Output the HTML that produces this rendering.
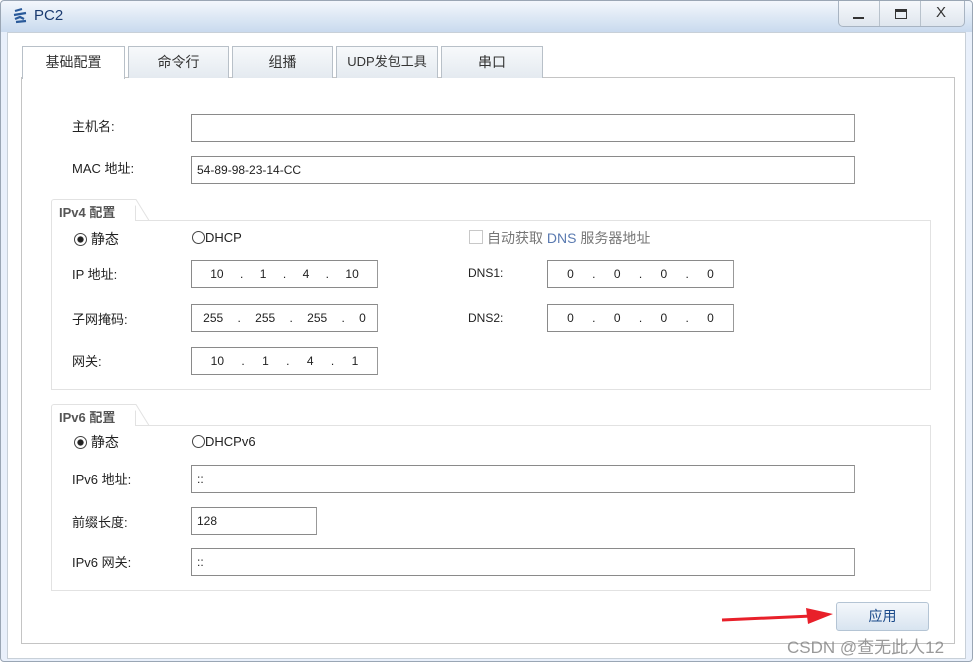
<!DOCTYPE html>
<html><head><meta charset="utf-8"><style>
*{box-sizing:border-box;margin:0;padding:0}
body{width:976px;height:666px;background:#fff;font-family:"Liberation Sans","Noto Sans CJK SC",sans-serif;font-size:13px;color:#222;position:relative;overflow:hidden}
.a{position:absolute}
.win{left:0;top:0;width:973px;height:662px;border:1px solid #9aa6b4;border-radius:4px;background:#e9f0fb}
.title{left:1px;top:1px;width:971px;height:31px;background:linear-gradient(#f3f7fc,#c9daee);border-radius:4px 4px 0 0}
.inner{left:7px;top:32px;width:959px;height:627px;background:#fff;border:1px solid #c8d0d8}
.box{left:21px;top:77px;width:934px;height:567px;border:1px solid #c4c4c4;background:#fff}
.tab{top:46px;height:32px;border:1px solid #b8c0c8;border-bottom:none;background:linear-gradient(#f7f9fb,#e4eaf0);text-align:center;line-height:30px;font-size:14px;color:#333}
.inp{height:28px;border:1px solid #8a8a8a;background:#fff;font-size:12px;line-height:26px;padding-left:5px;border-right-color:#999}
.lbl{font-size:13px;color:#222}
.grp{border:1px solid #e2e2e2;background:#fff}
.gt{font-size:13px;font-weight:bold;color:#555;background:#fff}
.rad{width:13px;height:13px;border:1px solid #444;border-radius:50%;display:inline-block;vertical-align:-2px}
.ip{display:flex;justify-content:space-around;padding:0 10px}
</style></head><body>
<div class="a win"></div>
<div class="a title"></div>
<svg class="a" style="left:12px;top:7px" width="18" height="18"><path d="M3 4 L10 2 M2 8 L14 6 M3 12 L8 10 L12 12 M4 15 L14 14" stroke="#2a5a9a" stroke-width="2.2" fill="none"/></svg>
<div class="a" style="left:34px;top:7px;font-size:15px;color:#1a3a70">PC2</div>
<div class="a" style="left:838px;top:1px;width:127px;height:26px;border:1px solid #a8b4c2;border-top:none;border-radius:0 0 5px 5px;background:linear-gradient(#f6f8fb,#dfe6ee)"></div>
<div class="a" style="left:879px;top:1px;width:1px;height:25px;background:#b8c2cc"></div>
<div class="a" style="left:920px;top:1px;width:1px;height:25px;background:#b8c2cc"></div>
<div class="a" style="left:853px;top:17px;width:11px;height:2px;background:#333"></div>
<div class="a" style="left:895px;top:9px;width:12px;height:10px;border:1px solid #333;border-top:3px solid #333"></div>
<div class="a" style="left:936px;top:4px;font-size:15px;color:#333">X</div>
<div class="a inner"></div>
<div class="a box"></div>
<div class="a tab" style="left:22px;width:103px;background:#fff;height:33px">基础配置</div>
<div class="a tab" style="left:128px;width:101px">命令行</div>
<div class="a tab" style="left:232px;width:101px">组播</div>
<div class="a tab" style="left:336px;width:102px;font-size:13px">UDP发包工具</div>
<div class="a tab" style="left:441px;width:102px">串口</div>

<div class="a lbl" style="left:72px;top:116px">主机名:</div>
<div class="a inp" style="left:191px;top:114px;width:664px"></div>
<div class="a lbl" style="left:72px;top:158px">MAC 地址:</div>
<div class="a inp" style="left:191px;top:156px;width:664px">54-89-98-23-14-CC</div>

<div class="a grp" style="left:51px;top:220px;width:880px;height:170px"></div>
<div class="a" style="left:51px;top:199px;width:85px;height:22px;border:1px solid #e2e2e2;border-bottom:none;background:#fff;border-top-left-radius:3px"></div>
<svg class="a" style="left:130px;top:199px" width="20" height="22"><path d="M0 0.5 L6 0.5 L19 21.5" stroke="#e2e2e2" fill="#fff"/></svg>
<div class="a gt" style="left:59px;top:202px">IPv4 配置</div>
<div class="a" style="left:74px;top:229px;font-size:14px"><span class="rad" style="background:radial-gradient(#222 35%,#fff 45%)"></span> 静态</div>
<div class="a" style="left:192px;top:230px;font-size:13px"><span class="rad"></span>DHCP</div>
<div class="a" style="left:469px;top:230px;width:14px;height:14px;border:1px solid #c8c8c8"></div>
<div class="a" style="left:487px;top:228px;font-size:14px;color:#777">自动获取 <span style="color:#5a7ab0">DNS</span> 服务器地址</div>
<div class="a lbl" style="left:72px;top:264px">IP 地址:</div>
<div class="a inp ip" style="left:191px;top:260px;width:187px"><span>10</span><span>.</span><span>1</span><span>.</span><span>4</span><span>.</span><span>10</span></div>
<div class="a lbl" style="left:72px;top:309px">子网掩码:</div>
<div class="a inp ip" style="left:191px;top:304px;width:187px;padding:0 4px"><span>255</span><span>.</span><span>255</span><span>.</span><span>255</span><span>.</span><span>0</span></div>
<div class="a lbl" style="left:72px;top:351px">网关:</div>
<div class="a inp ip" style="left:191px;top:347px;width:187px"><span>10</span><span>.</span><span>1</span><span>.</span><span>4</span><span>.</span><span>1</span></div>
<div class="a lbl" style="left:468px;top:266px;font-size:12px">DNS1:</div>
<div class="a inp ip" style="left:547px;top:260px;width:187px"><span>0</span><span>.</span><span>0</span><span>.</span><span>0</span><span>.</span><span>0</span></div>
<div class="a lbl" style="left:468px;top:311px;font-size:12px">DNS2:</div>
<div class="a inp ip" style="left:547px;top:304px;width:187px"><span>0</span><span>.</span><span>0</span><span>.</span><span>0</span><span>.</span><span>0</span></div>

<div class="a grp" style="left:51px;top:425px;width:880px;height:166px"></div>
<div class="a" style="left:51px;top:404px;width:85px;height:22px;border:1px solid #e2e2e2;border-bottom:none;background:#fff;border-top-left-radius:3px"></div>
<svg class="a" style="left:130px;top:404px" width="20" height="22"><path d="M0 0.5 L6 0.5 L19 21.5" stroke="#e2e2e2" fill="#fff"/></svg>
<div class="a gt" style="left:59px;top:407px">IPv6 配置</div>
<div class="a" style="left:74px;top:432px;font-size:14px"><span class="rad" style="background:radial-gradient(#222 35%,#fff 45%)"></span> 静态</div>
<div class="a" style="left:192px;top:434px;font-size:13px"><span class="rad"></span>DHCPv6</div>
<div class="a lbl" style="left:72px;top:469px">IPv6 地址:</div>
<div class="a inp" style="left:191px;top:465px;width:664px">::</div>
<div class="a lbl" style="left:72px;top:512px">前缀长度:</div>
<div class="a inp" style="left:191px;top:507px;width:126px">128</div>
<div class="a lbl" style="left:72px;top:552px">IPv6 网关:</div>
<div class="a inp" style="left:191px;top:548px;width:664px">::</div>

<div class="a" style="left:836px;top:602px;width:93px;height:29px;border:1px solid #b4c4d4;border-radius:3px;background:linear-gradient(#f4f7fb,#d8e4f0);text-align:center;line-height:27px;font-size:14px;color:#1a4a8a">应用</div>
<svg class="a" style="left:720px;top:606px" width="116" height="20"><path d="M2 14 L92 10" stroke="#e8202a" stroke-width="3"/><path d="M86 2 L113 8 L88 18 Z" fill="#e8202a"/></svg>
<div class="a" style="left:787px;top:633px;font-size:17px;color:#888;opacity:.85">CSDN @查无此人12</div>
</body></html>
